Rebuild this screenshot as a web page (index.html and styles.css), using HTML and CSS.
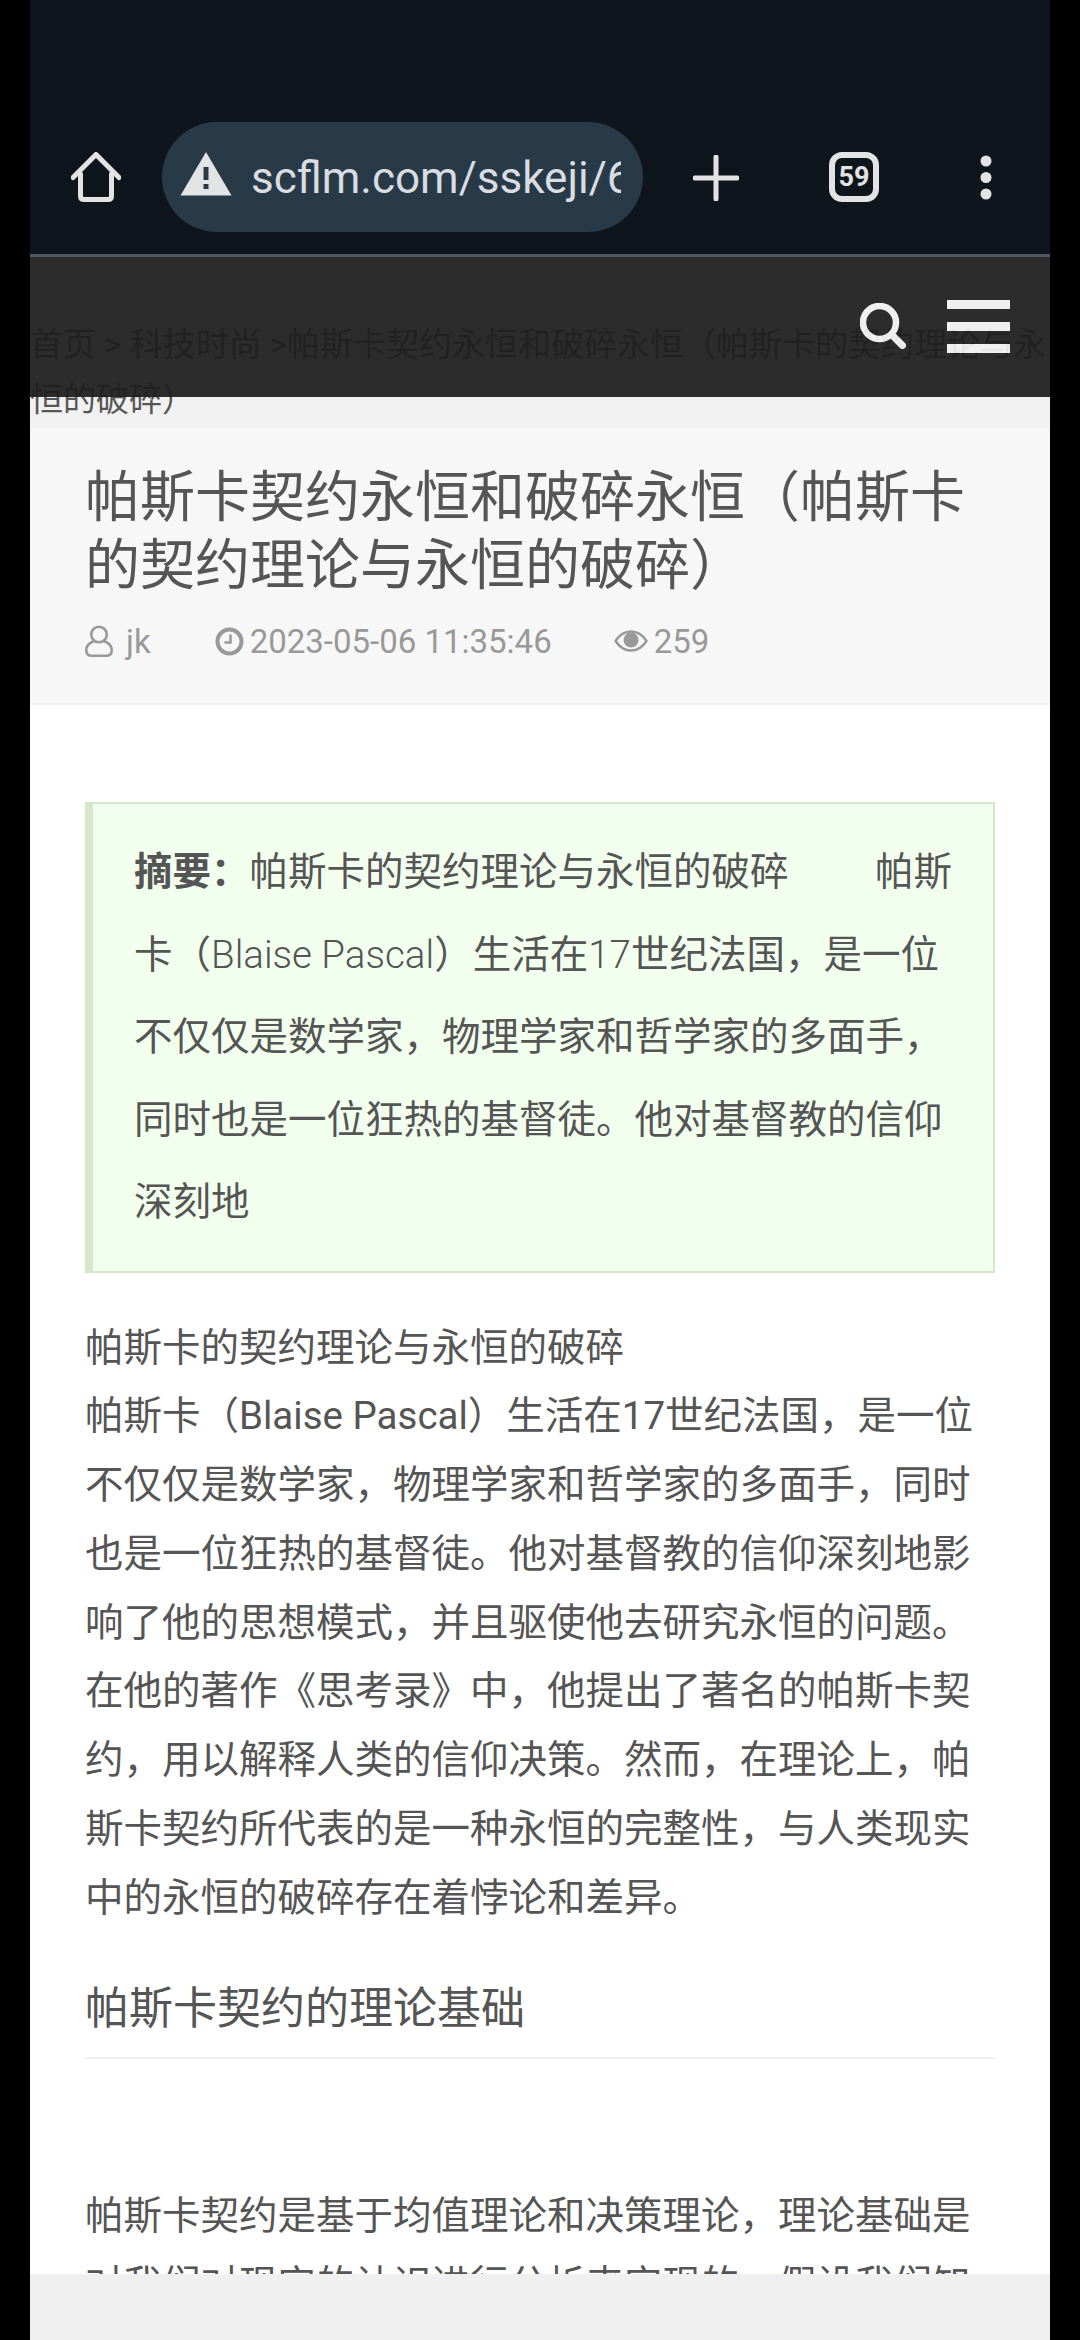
FILE: index.html
```html
<!DOCTYPE html>
<html lang="zh-CN">

<head>
    <meta charset="UTF-8" />
    <meta name="viewport" content="width=device-width, initial-scale=1.0" />
    <title>帕斯卡契约永恒和破碎永恒</title>
    <link rel="stylesheet" href="styles.css">
</head>

<body>
    <div class="screen">
        <!-- browser toolbar -->
        <div class="toolbar">
            <svg class="tool_home" width="50" height="50" viewBox="0 0 50 50">
                <path d="M2 25.500 L25 2.500 L48 25.500 M9.500 22 V44 Q9.500 47.500 13 47.500 H37 Q40.500 47.500 40.500 44 V22" fill="none" stroke="#e2e3e5" stroke-width="5" stroke-linecap="round" stroke-linejoin="round" />
            </svg>
            <div class="address">
                <svg class="warn" width="52" height="44" viewBox="0 0 52 44">
                    <path d="M26 0 L51.500 43.500 H0.500 Z" fill="#e2e3e5" />
                    <rect x="23.500" y="15" width="5" height="13" fill="#283a47" />
                    <rect x="23.500" y="32" width="5" height="5" fill="#283a47" />
                </svg>
                <span class="url">scflm.com/sskeji/6879.html</span>
            </div>
            <svg class="tool_plus" width="46" height="46" viewBox="0 0 46 46">
                <path d="M23 2 V44 M2 23 H44" fill="none" stroke="#e2e3e5" stroke-width="5" stroke-linecap="round" />
            </svg>
            <div class="tabs">59</div>
            <svg class="tool_more" width="12" height="46" viewBox="0 0 12 46">
                <circle cx="6" cy="6" r="5.500" fill="#e2e3e5" />
                <circle cx="6" cy="22.500" r="5.500" fill="#e2e3e5" />
                <circle cx="6" cy="39" r="5.500" fill="#e2e3e5" />
            </svg>
        </div>

        <div class="page">
            <!-- fixed site header, see-through over the breadcrumb -->
            <header class="site_head">
                <svg class="head_search" width="46" height="46" viewBox="0 0 46 46">
                    <circle cx="19.500" cy="19.500" r="16.500" fill="none" stroke="#f0f0f0" stroke-width="6.500" />
                    <path d="M32 32 L42.500 42.500" fill="none" stroke="#f0f0f0" stroke-width="7" stroke-linecap="round" />
                </svg>
                <div class="head_menu">
                    <i></i>
                    <i></i>
                    <i></i>
                </div>
            </header>

            <div class="crumb">首页 &gt; 科技时尚 &gt;帕斯卡契约永恒和破碎永恒（帕斯卡的契约理论与永恒的破碎）</div>

            <div class="title_wrap">
                <h1 class="title">帕斯卡契约永恒和破碎永恒（帕斯卡的契约理论与永恒的破碎）</h1>
                <div class="meta">
                    <span class="meta_item meta_user">
                        <svg width="28" height="32" viewBox="0 0 28 32">
                            <circle cx="14" cy="9.500" r="7.800" fill="none" stroke="#999" stroke-width="2.600" />
                            <path d="M9 16 C4 18 1.300 21 1.300 25 C1.300 29 3 30.700 6 30.700 H22 C25 30.700 26.700 29 26.700 25 C26.700 21 24 18 19 16" fill="none" stroke="#999" stroke-width="2.600" />
                        </svg>
                        jk
                    </span>
                    <span class="meta_item meta_time">
                        <svg width="29" height="29" viewBox="0 0 29 29">
                            <circle cx="14.500" cy="14.500" r="12" fill="none" stroke="#999" stroke-width="4" />
                            <path d="M15.500 7.500 V15.500 H9.500" fill="none" stroke="#999" stroke-width="2.500" />
                        </svg>
                        2023-05-06 11:35:46
                    </span>
                    <span class="meta_item meta_views">
                        <svg width="34" height="22" viewBox="0 0 34 22">
                            <path d="M1.500 11 C6 4 11 1.500 17 1.500 C23 1.500 28 4 32.500 11 C28 18 23 20.500 17 20.500 C11 20.500 6 18 1.500 11 Z" fill="none" stroke="#999" stroke-width="2.400" />
                            <circle cx="17" cy="10" r="7.500" fill="#999" />
                        </svg>
                        259
                    </span>
                </div>
            </div>

            <article class="article">
                <div class="summary"><b>摘要：</b>帕斯卡的契约理论与永恒的破碎 　　帕斯卡（<span class="latin">Blaise Pascal</span>）生活在<span class="latin">17</span>世纪法国，是一位不仅仅是数学家，物理学家和哲学家的多面手，同时也是一位狂热的基督徒。他对基督教的信仰深刻地</div>
                <p class="para">帕斯卡的契约理论与永恒的破碎<br>帕斯卡（Blaise Pascal）生活在17世纪法国，是一位不仅仅是数学家，物理学家和哲学家的多面手，同时也是一位狂热的基督徒。他对基督教的信仰深刻地影响了他的思想模式，并且驱使他去研究永恒的问题。在他的著作《思考录》中，他提出了著名的帕斯卡契约，用以解释人类的信仰决策。然而，在理论上，帕斯卡契约所代表的是一种永恒的完整性，与人类现实中的永恒的破碎存在着悖论和差异。</p>
                <h2 class="sub_title">帕斯卡契约的理论基础</h2>
                <p class="para">帕斯卡契约是基于均值理论和决策理论，理论基础是对我们对现实的认识进行分析来实现的。假设我们知道</p>
            </article>
        </div>

        <div class="bottom_bar"></div>
    </div>
</body>

</html>
```

FILE: styles.css
```css
html,
body {
    height: 100%;
    padding: 0;
    margin: 0;
    background: #000;
}

body {
    font-family: Roboto, "Noto Sans CJK SC", sans-serif;
    color: #555;
}

.screen {
    width: 1020px;
    height: 2340px;
    margin: 0 30px;
    display: flex;
    flex-direction: column;
    overflow: hidden;
    background: #f1f1f1;
}

/* toolbar */
.toolbar {
    height: 254px;
    flex: none;
    box-sizing: border-box;
    padding-top: 122px;
    background: #0f151c;
    display: flex;
    align-items: flex-start;
    color: #e2e3e5;
}

.tool_home {
    margin: 30px 41px 0 41px;
}

.address {
    width: 481px;
    height: 110px;
    box-sizing: border-box;
    padding: 0 22px 0 18px;
    border-radius: 55px;
    background: #283a47;
    display: flex;
    align-items: center;
    flex: none;
}

.warn {
    flex: none;
    margin-top: -7px;
    margin-right: 19px;
}

.url {
    font-size: 44px;
    line-height: 52px;
    padding-top: 2px;
    white-space: nowrap;
    overflow: hidden;
    color: #d9dde2;
}

.tool_plus {
    margin: 33px 0 0 50px;
}

.tabs {
    width: 50px;
    height: 50px;
    margin: 30px 0 0 90px;
    box-sizing: border-box;
    border: 6px solid #e2e3e5;
    border-radius: 13px;
    font-size: 27px;
    font-weight: 700;
    display: flex;
    align-items: center;
    justify-content: center;
}

.tool_more {
    margin: 33px 0 0 101px;
}

/* page */
.page {
    flex: 1;
    position: relative;
    overflow: hidden;
    padding-top: 63px;
}

.site_head {
    position: absolute;
    top: 0;
    left: 0;
    right: 0;
    height: 143px;
    box-sizing: border-box;
    border-top: 3px solid #444c57;
    background: #1e1e1e;
    opacity: .93;
    display: flex;
    justify-content: flex-end;
    align-items: flex-start;
    z-index: 9;
}

.head_search {
    margin: 46px 41px 0 0;
}

.head_menu {
    width: 63px;
    margin: 43px 40px 0 0;
}

.head_menu i {
    display: block;
    height: 9px;
    margin-bottom: 13px;
    background: #f0f0f0;
}

.crumb {
    padding-bottom: 1px;
    font-size: 33px;
    line-height: 55px;
    color: #555;
    background: #f1f1f1;
}

.title_wrap {
    box-sizing: border-box;
    height: 277px;
    padding: 34.5px 55px 0;
    background: #f7f7f7;
    border-bottom: 2.75px solid #f0f0f0;
}

.title {
    margin: 0;
    font-size: 55px;
    font-weight: 400;
    line-height: 68.75px;
}

.meta {
    display: flex;
    align-items: center;
    height: 46px;
    margin-top: 18px;
    font-size: 33px;
    color: #999;
}

.meta_item {
    display: flex;
    align-items: center;
    gap: 6px;
}

.meta_user {
    gap: 13px;
    margin-right: 64px;
}

.meta_time {
    margin-right: 62px;
}

.meta_views {
    gap: 6px;
}

.article {
    padding: 97px 55px 0;
    background: #fff;
    height: 100%;
}

.summary {
    box-sizing: border-box;
    padding: 27px 30px 27px 41px;
    margin-bottom: 41px;
    border: 2.75px solid #d6e9c6;
    border-left-width: 8px;
    background: #f2ffee;
    font-size: 38.5px;
    line-height: 82.5px;
}

.summary .latin {
    font-weight: 300;
}

.summary b {
    font-weight: 700;
}

.para {
    margin: 0;
    font-size: 38.5px;
    line-height: 68.75px;
}

.sub_title {
    margin: 50px 0 123px;
    padding-bottom: 20px;
    border-bottom: 2px solid #f0f0f0;
    font-size: 44px;
    font-weight: 400;
    line-height: 55px;
}

.bottom_bar {
    height: 66px;
    flex: none;
    background: #f0f0f0;
    position: relative;
    z-index: 10;
}
```
